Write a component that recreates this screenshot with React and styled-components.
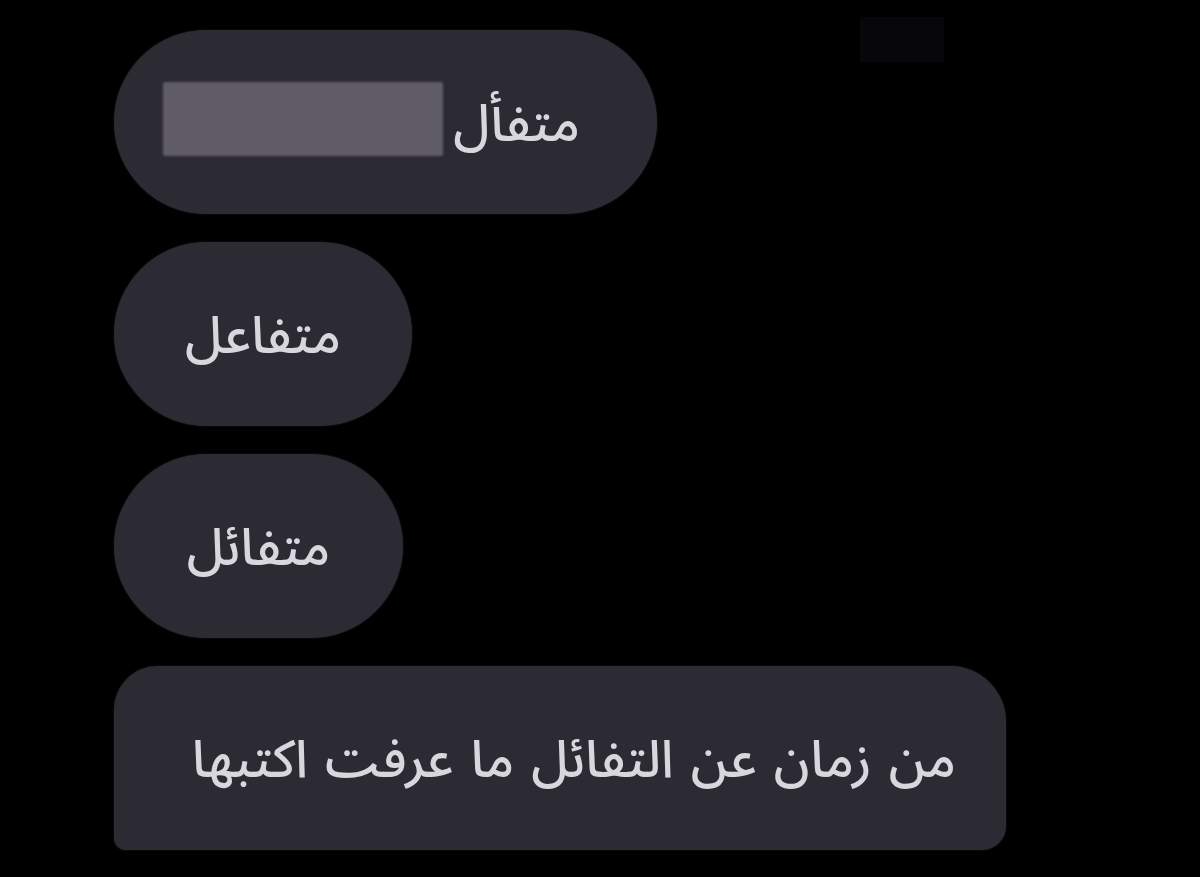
import React from "react";
import styled, { createGlobalStyle } from "styled-components";

const Global = createGlobalStyle`
  html, body {
    margin: 0;
    padding: 0;
    background: #000;
    height: 877px;
    overflow: hidden;
  }
  #root { height: 877px; }
`;

const Screen = styled.div`
  position: relative;
  width: 1200px;
  height: 877px;
  background: #000;
  box-sizing: border-box;
  padding: 30px 0 0 114px;
  display: flex;
  flex-direction: column;
  align-items: flex-start;
  gap: 28px;
`;

const Bubble = styled.div`
  direction: rtl;
  box-sizing: border-box;
  width: ${(p) => p.$w}px;
  height: 184px;
  background: #2c2b33;
  border-radius: ${(p) => p.$radius || "92px"};
  display: flex;
  align-items: center;
  justify-content: ${(p) => p.$justify || "center"};
  padding: ${(p) => p.$pad || "0"};
  gap: 10px;
  box-shadow: 0 0 2px rgba(60, 58, 68, 0.6);
`;

const Text = styled.span`
  font-family: "Noto Sans Arabic", "Noto Sans", "DejaVu Sans", sans-serif;
  font-size: 52px;
  font-weight: 500;
  word-spacing: ${(p) => p.$wordSpacing || 0}px;
  color: #d9d7de;
  line-height: 1;
  white-space: nowrap;
  margin-top: 6px;
  filter: blur(0.5px);
`;

const Redaction = styled.div`
  width: 280px;
  height: 74px;
  margin-top: -6px;
  background: #5f5c66;
  border-radius: 2px;
  filter: blur(1.2px);
`;

const Smudge = styled.div`
  position: absolute;
  left: 860px;
  top: 17px;
  width: 84px;
  height: 45px;
  background: #07070a;
`;

export default function App() {
  return (
    <>
      <Global />
      <Screen>
        <Smudge />
        <Bubble $w={543} $justify="flex-start" $pad="0 77px 0 0">
          <Text>متفأل</Text>
          <Redaction />
        </Bubble>
        <Bubble $w={298}>
          <Text>متفاعل</Text>
        </Bubble>
        <Bubble $w={289}>
          <Text>متفائل</Text>
        </Bubble>
        <Bubble
          $w={892}
          $justify="flex-start"
          $pad="0 50px 0 0"
          $radius="44px 56px 24px 12px"
        >
          <Text $wordSpacing={3.5}>من زمان عن التفائل ما عرفت اكتبها</Text>
        </Bubble>
      </Screen>
    </>
  );
}
